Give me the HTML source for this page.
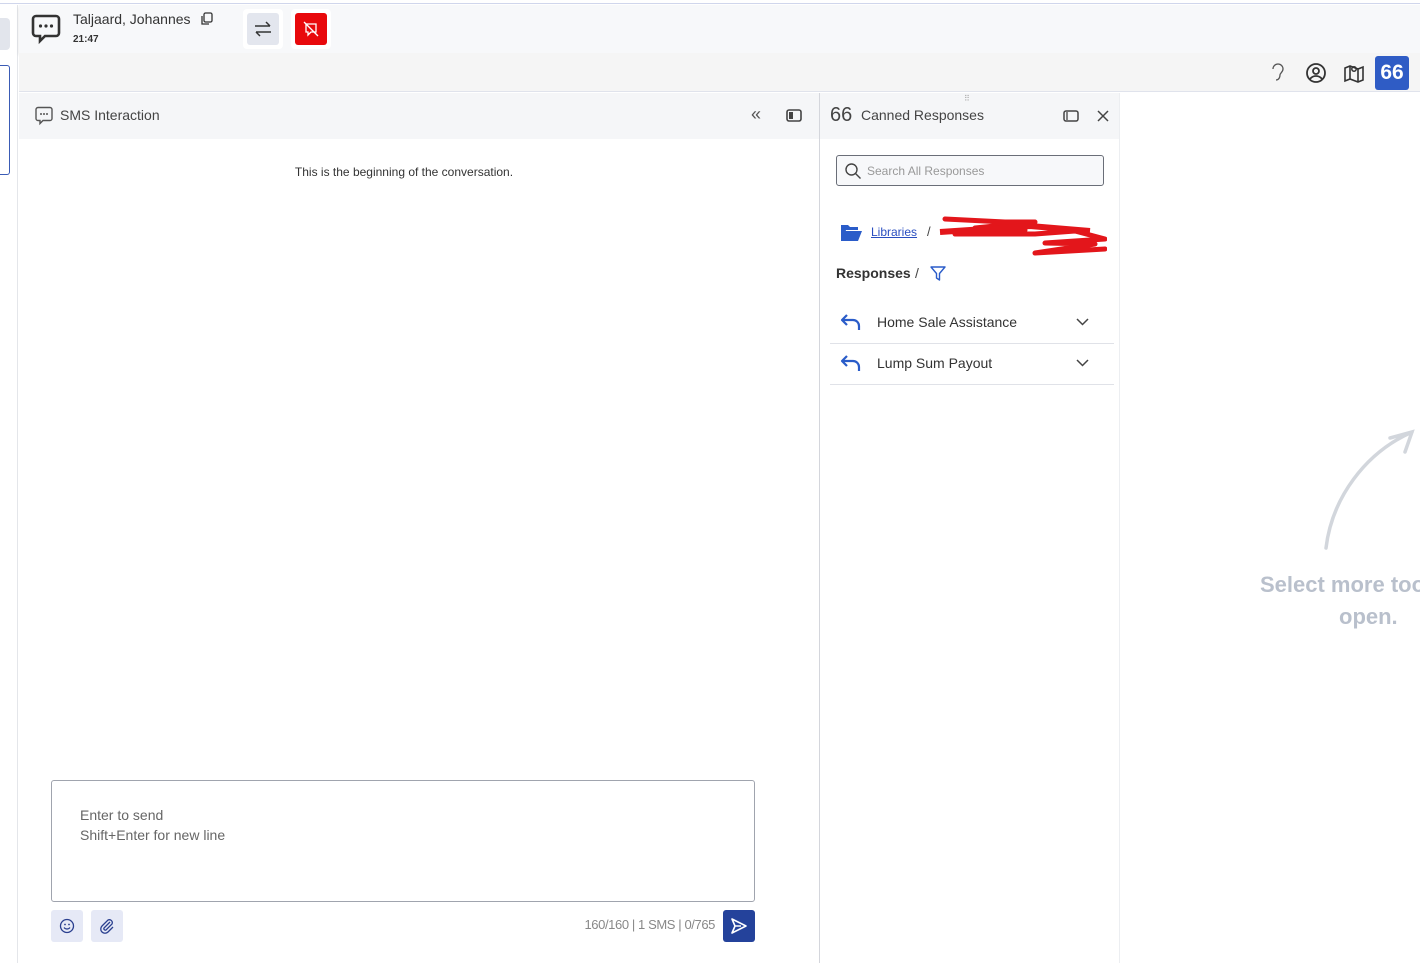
<!DOCTYPE html>
<html><head><style>
*{margin:0;padding:0;box-sizing:border-box}
body{width:1420px;height:963px;overflow:hidden;background:#fff;font-family:"Liberation Sans",sans-serif;position:relative;color:#333}
.a{position:absolute}
</style></head><body>
<div class="a" style="left:0;top:0;width:1420px;height:4px;background:#fff;border-bottom:1px solid #d0d6ec"></div>
<div class="a" style="left:0;top:5px;width:18px;height:958px;background:#fff;border-right:1px solid #e4e6ea"></div>
<div class="a" style="left:0;top:18px;width:10px;height:32px;background:#e2e5ec;border-radius:0 4px 4px 0"></div>
<div class="a" style="left:0;top:65px;width:10px;height:110px;border:1px solid #3a5bb5;border-left:none;border-radius:0 3px 3px 0"></div>
<!-- header -->
<div class="a" style="left:19px;top:5px;width:1401px;height:48px;background:#f7f8fa;box-shadow:0 2px 3px rgba(0,0,0,.12)"></div>
<svg class="a" style="left:30px;top:13px" width="32" height="32" viewBox="0 0 32 32"><path d="M6 3h20a3 3 0 0 1 3 3v14a3 3 0 0 1-3 3H15l-5 5v-5H6a3 3 0 0 1-3-3V6a3 3 0 0 1 3-3z" fill="none" stroke="#333" stroke-width="2.6"/><circle cx="10.5" cy="13" r="1.6" fill="#333"/><circle cx="16" cy="13" r="1.6" fill="#333"/><circle cx="21.5" cy="13" r="1.6" fill="#333"/></svg>
<div class="a" style="left:73px;top:11px;font-size:14px;color:#333">Taljaard, Johannes</div>
<svg class="a" style="left:200px;top:12px" width="14" height="14" viewBox="0 0 14 14"><rect x="4" y="1" width="8" height="9" rx="1.5" fill="none" stroke="#333" stroke-width="1.3"/><path d="M2 4v8h7" fill="none" stroke="#333" stroke-width="1.3"/></svg>
<div class="a" style="left:73px;top:34px;font-size:10px;font-weight:bold;color:#333">21:47</div>
<div class="a" style="left:243px;top:9px;width:40px;height:40px;background:#fff;border-radius:4px"></div>
<div class="a" style="left:247px;top:13px;width:32px;height:32px;background:#e3e6ee;border-radius:3px"></div>
<svg class="a" style="left:253px;top:19px" width="20" height="20" viewBox="0 0 20 20"><path d="M2 7h15M13 3l4 4M18 13H3M7 17l-4-4" fill="none" stroke="#333" stroke-width="1.5"/></svg>
<div class="a" style="left:291px;top:9px;width:40px;height:40px;background:#fff;border-radius:4px"></div>
<div class="a" style="left:295px;top:13px;width:32px;height:32px;background:#e8090c;border-radius:3px"></div>
<svg class="a" style="left:303px;top:21px" width="16" height="16" viewBox="0 0 16 16"><path d="M3 3h10v8H8l-3 3v-3H3z" fill="none" stroke="#fff" stroke-width="1.3"/><path d="M1 1l14 14" stroke="#fff" stroke-width="1.3"/></svg>
<!-- toolbar -->
<div class="a" style="left:19px;top:53px;width:1401px;height:39px;background:#f5f5f5;border-bottom:1px solid #e0e3ec"></div>
<svg class="a" style="left:1266px;top:62px" width="22" height="22" viewBox="0 0 22 22"><path d="M7 7a5 5 0 0 1 10 0c0 3-3 4-3 6s-1 5-4 5" fill="none" stroke="#555" stroke-width="1.3"/></svg>
<svg class="a" style="left:1305px;top:62px" width="22" height="22" viewBox="0 0 22 22"><circle cx="11" cy="11" r="9" fill="none" stroke="#333" stroke-width="1.8"/><circle cx="11" cy="9" r="3" fill="none" stroke="#333" stroke-width="1.8"/><path d="M5 17c3-4 9-4 12 0" fill="none" stroke="#333" stroke-width="1.8"/></svg>
<svg class="a" style="left:1343px;top:62px" width="22" height="22" viewBox="0 0 22 22"><path d="M2 6l5-2 8 3 5-2v13l-5 2-8-3-5 2z M7 4v13 M15 7v13" fill="none" stroke="#333" stroke-width="1.6"/><circle cx="11" cy="7" r="2.2" fill="none" stroke="#333" stroke-width="1.5"/></svg>
<div class="a" style="left:1375px;top:56px;width:34px;height:34px;background:#2f5cc5;border-radius:3px;color:#fff;font-size:21px;font-weight:bold;text-align:center;line-height:34px">66</div>
<!-- SMS panel -->
<div class="a" style="left:19px;top:93px;width:800px;height:46px;background:#f5f6f8"></div>
<svg class="a" style="left:34px;top:106px" width="20" height="20" viewBox="0 0 20 20"><path d="M4 1.5h12a2 2 0 0 1 2 2v9a2 2 0 0 1-2 2H9l-3 3v-3H4a2 2 0 0 1-2-2v-9a2 2 0 0 1 2-2z" fill="none" stroke="#555" stroke-width="1.4"/><circle cx="7" cy="8" r="1" fill="#555"/><circle cx="10" cy="8" r="1" fill="#555"/><circle cx="13" cy="8" r="1" fill="#555"/></svg>
<div class="a" style="left:60px;top:107px;font-size:14px;color:#444">SMS Interaction</div>
<div class="a" style="left:751px;top:104px;font-size:18px;color:#555">«</div>
<svg class="a" style="left:786px;top:109px" width="16" height="13" viewBox="0 0 16 13"><rect x="1" y="1" width="14" height="11" rx="2" fill="none" stroke="#444" stroke-width="1.6"/><rect x="3" y="3" width="4" height="7" fill="#444"/></svg>
<div class="a" style="left:19px;top:165px;width:770px;text-align:center;font-size:12px;color:#333">This is the beginning of the conversation.</div>
<div class="a" style="left:51px;top:780px;width:704px;height:122px;border:1px solid #a0a4ae;border-radius:3px"></div>
<div class="a" style="left:80px;top:805px;font-size:14px;color:#666;line-height:20px">Enter to send<br>Shift+Enter for new line</div>
<div class="a" style="left:51px;top:910px;width:32px;height:32px;background:#e6e9f6;border-radius:3px"></div>
<svg class="a" style="left:59px;top:918px" width="16" height="16" viewBox="0 0 16 16"><circle cx="8" cy="8" r="6.5" fill="none" stroke="#2a3f8f" stroke-width="1.3"/><circle cx="6" cy="6.5" r=".9" fill="#2a3f8f"/><circle cx="10" cy="6.5" r=".9" fill="#2a3f8f"/><path d="M5 9.5c1.5 2 4.5 2 6 0" fill="none" stroke="#2a3f8f" stroke-width="1.2"/></svg>
<div class="a" style="left:91px;top:910px;width:32px;height:32px;background:#e6e9f6;border-radius:3px"></div>
<svg class="a" style="left:99px;top:918px" width="16" height="16" viewBox="0 0 16 16"><path d="M11 4l-6 6a1.5 1.5 0 0 0 2 2l6-6a3 3 0 0 0-4-4L3 8a4 4 0 0 0 6 6l5-5" fill="none" stroke="#2a3f8f" stroke-width="1.3"/></svg>
<div class="a" style="left:560px;top:917px;width:155px;text-align:right;font-size:13px;color:#888;letter-spacing:-0.4px">160/160 | 1 SMS | 0/765</div>
<div class="a" style="left:723px;top:910px;width:32px;height:32px;background:#24429b;border-radius:3px"></div>
<svg class="a" style="left:730px;top:917px" width="18" height="18" viewBox="0 0 18 18"><path d="M2 2l14 7-14 7 3-7z M5 9h6" fill="none" stroke="#fff" stroke-width="1.6" stroke-linejoin="round"/></svg>
<!-- canned -->
<div class="a" style="left:819px;top:93px;width:1px;height:870px;background:#d4d6dc"></div>
<div class="a" style="left:1119px;top:93px;width:1px;height:870px;background:#eceef1"></div>
<div class="a" style="left:820px;top:93px;width:299px;height:46px;background:#f5f6f8"></div>
<div class="a" style="left:964px;top:94px;font-size:8px;color:#aaa;letter-spacing:-1px">⠿</div>
<div class="a" style="left:830px;top:104px;font-size:20px;color:#444">66</div>
<div class="a" style="left:861px;top:107px;font-size:14px;color:#444">Canned Responses</div>
<svg class="a" style="left:1063px;top:110px" width="16" height="12" viewBox="0 0 16 12"><rect x="1" y="1" width="14" height="10" rx="2" fill="none" stroke="#444" stroke-width="1.5"/><path d="M4 2v8" stroke="#444" stroke-width="1.3"/></svg>
<svg class="a" style="left:1097px;top:110px" width="12" height="12" viewBox="0 0 12 12"><path d="M1 1l10 10M11 1L1 11" stroke="#444" stroke-width="1.5"/></svg>
<div class="a" style="left:836px;top:155px;width:268px;height:31px;border:1px solid #6a6e78;border-radius:3px;background:#f7f8fa"></div>
<svg class="a" style="left:844px;top:162px" width="18" height="18" viewBox="0 0 18 18"><circle cx="7.5" cy="7.5" r="5.5" fill="none" stroke="#444" stroke-width="1.4"/><path d="M11.5 11.5l5 5" stroke="#444" stroke-width="1.4"/></svg>
<div class="a" style="left:867px;top:164px;font-size:12px;color:#999">Search All Responses</div>
<svg class="a" style="left:840px;top:223px" width="22" height="19" viewBox="0 0 22 19"><path d="M1 2h7l2 2h8v3H6l-3 11H1z" fill="#2a5cc9"/><path d="M5 8h17l-4 10H1z" fill="#2a5cc9"/></svg>
<div class="a" style="left:871px;top:225px;font-size:12px;color:#2a4ec0;text-decoration:underline">Libraries</div>
<div class="a" style="left:927px;top:224px;font-size:13px;color:#444">/</div>
<svg class="a" style="left:935px;top:214px" width="172" height="44" viewBox="0 0 172 44"><path d="M10 5l60 3 30 0-60 6 50 2-70 4 80 0 40-3 30 8-60 4 50 1-60 9 70-4" fill="none" stroke="#e3161b" stroke-width="5" stroke-linecap="round" stroke-linejoin="round"/><path d="M5 18l90-6 60 5" fill="none" stroke="#e3161b" stroke-width="6"/></svg>
<div class="a" style="left:836px;top:265px;font-size:14px;font-weight:bold;color:#333">Responses</div>
<div class="a" style="left:915px;top:265px;font-size:14px;color:#444">/</div>
<svg class="a" style="left:930px;top:266px" width="16" height="15" viewBox="0 0 16 15"><path d="M1 1h14l-5.5 6.5V14L6.5 12V7.5z" fill="none" stroke="#2a5cc9" stroke-width="1.4" stroke-linejoin="round"/></svg>
<svg class="a" style="left:840px;top:312px" width="22" height="20" viewBox="0 0 22 20"><path d="M7 3L2 8l5 5M2 8h11a6 6 0 0 1 6 6v4" fill="none" stroke="#2a5cc9" stroke-width="2.2" stroke-linejoin="round"/></svg>
<div class="a" style="left:877px;top:314px;font-size:14px;color:#333">Home Sale Assistance</div>
<svg class="a" style="left:1076px;top:318px" width="13" height="8" viewBox="0 0 13 8"><path d="M1 1l5.5 5.5L12 1" fill="none" stroke="#444" stroke-width="1.5"/></svg>
<div class="a" style="left:830px;top:343px;width:284px;height:1px;background:#e0e2e8"></div>
<svg class="a" style="left:840px;top:353px" width="22" height="20" viewBox="0 0 22 20"><path d="M7 3L2 8l5 5M2 8h11a6 6 0 0 1 6 6v4" fill="none" stroke="#2a5cc9" stroke-width="2.2" stroke-linejoin="round"/></svg>
<div class="a" style="left:877px;top:355px;font-size:14px;color:#333">Lump Sum Payout</div>
<svg class="a" style="left:1076px;top:359px" width="13" height="8" viewBox="0 0 13 8"><path d="M1 1l5.5 5.5L12 1" fill="none" stroke="#444" stroke-width="1.5"/></svg>
<div class="a" style="left:830px;top:384px;width:284px;height:1px;background:#e0e2e8"></div>
<!-- right -->
<svg class="a" style="left:1320px;top:428px" width="100" height="124" viewBox="0 0 100 124"><path d="M6 120C12 70 45 25 92 4M70 10l22-6-7 20" fill="none" stroke="#d2d6dc" stroke-width="3.5" stroke-linecap="round"/></svg>
<div class="a" style="left:1260px;top:572px;font-size:22px;font-weight:bold;color:#b9c0cc;white-space:nowrap">Select more tools to</div>
<div class="a" style="left:1339px;top:604px;font-size:22px;font-weight:bold;color:#b9c0cc;white-space:nowrap">open.</div>
</body></html>
